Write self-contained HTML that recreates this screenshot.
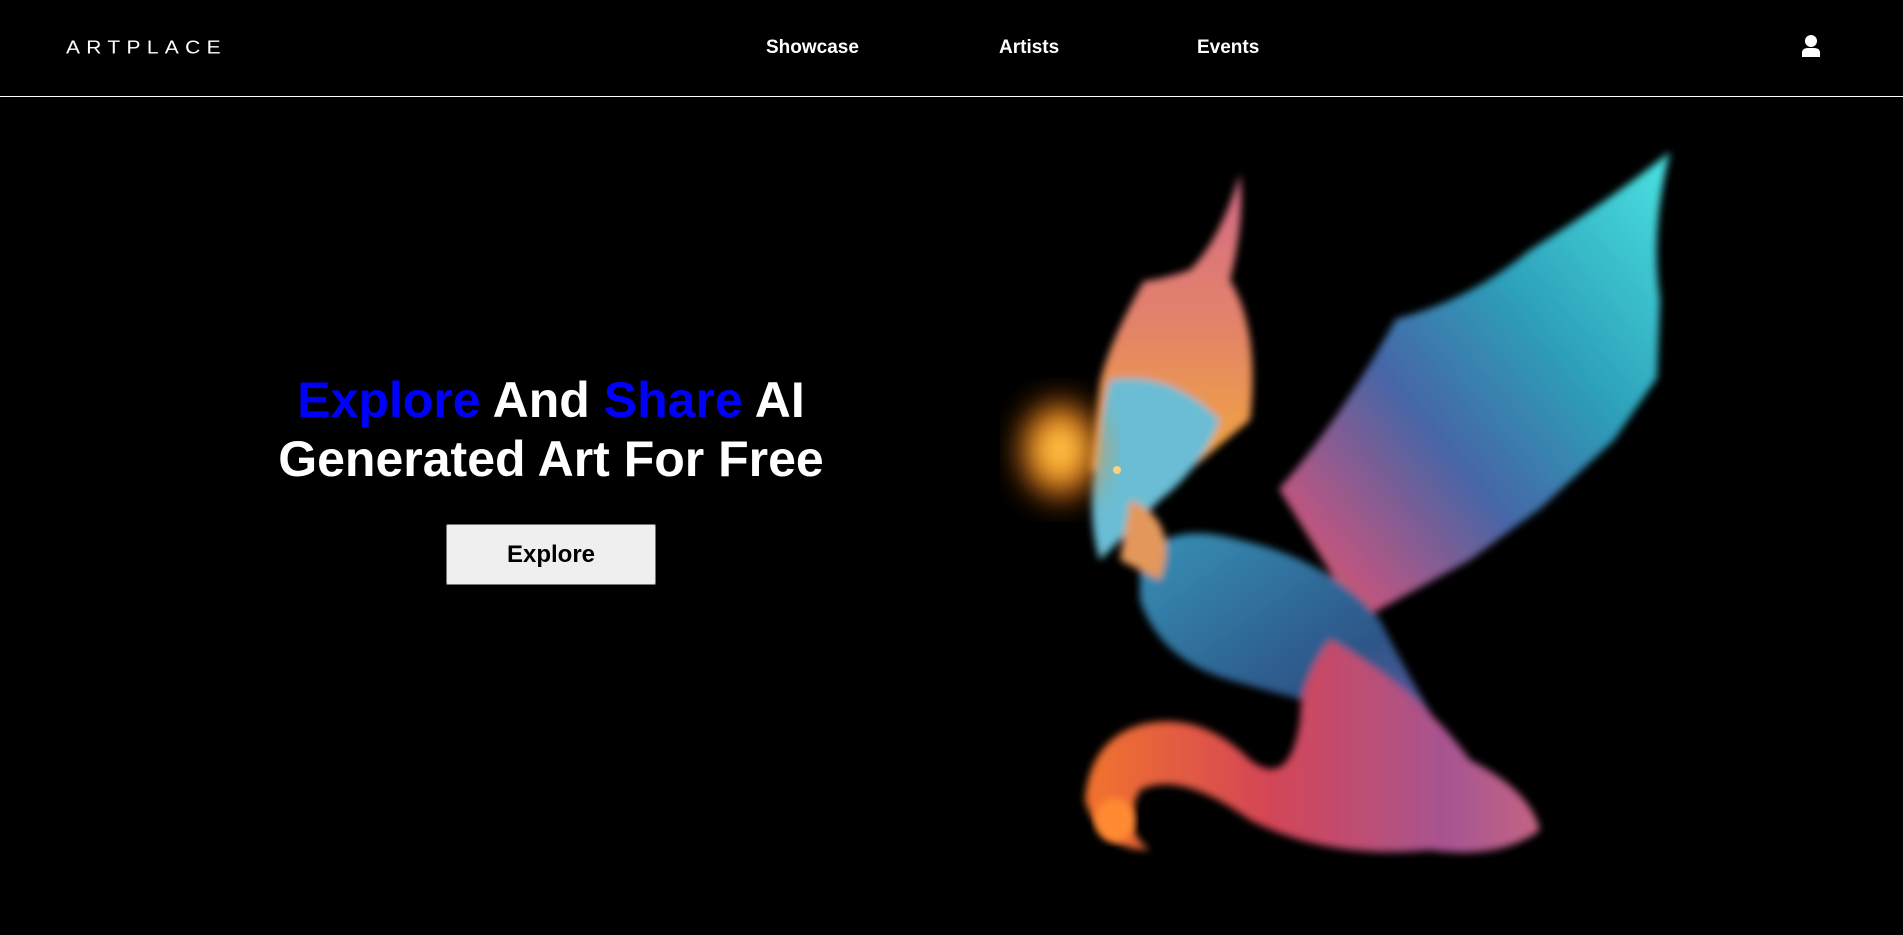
<!DOCTYPE html>
<html><head><meta charset="utf-8"><style>
html,body{margin:0;padding:0;background:#000;width:1903px;height:935px;overflow:hidden;font-family:"Liberation Sans",Arial,sans-serif;color:#fff}
.nav{position:absolute;left:0;top:0;width:1903px;height:96px;border-bottom:1px solid #fff}
.logo{position:absolute;left:66px;top:35px;font-size:21px;letter-spacing:6.3px;font-weight:300;line-height:26px;transform:scaleY(0.9)}
.link{position:absolute;top:36px;font-size:19px;font-weight:bold;line-height:24px}
.h{position:absolute;left:251px;width:600px;text-align:center;font-size:50px;font-weight:bold;line-height:59px;top:371px}
.b{color:#0000ff}
.btn{position:absolute;left:446px;top:524px;width:210px;height:61px;box-sizing:border-box;background:#efefef;border:1px solid #767676;border-radius:2px;color:#000;font-size:24px;font-weight:bold;text-align:center;line-height:60px}
svg{position:absolute;left:0;top:0}
</style></head><body>
<div class="nav">
<div class="logo">ARTPLACE</div>
<div class="link" style="left:766px">Showcase</div>
<div class="link" style="left:999px">Artists</div>
<div class="link" style="left:1197px">Events</div>
<svg width="1903" height="96" style="position:absolute;left:0;top:0"><circle cx="1811" cy="41" r="6" fill="#fff"/><path d="M1802 57 L1802 53 Q1802 48 1808 48 L1814 48 Q1820 48 1820 53 L1820 57 Z" fill="#fff"/></svg>
</div>
<div class="h"><span class="b">Explore</span> And <span class="b">Share</span> AI<br>Generated Art For Free</div>
<div class="btn">Explore</div>
<svg width="1903" height="935" style="top:0">
<defs>
<filter id="bl"><feGaussianBlur stdDeviation="4"/></filter>
<filter id="bl2"><feGaussianBlur stdDeviation="14"/></filter>
<linearGradient id="wing" x1="1" y1="0" x2="0" y2="1"><stop offset="0" stop-color="#4ff0ee"/><stop offset="0.35" stop-color="#2fa9c4"/><stop offset="0.6" stop-color="#4a6cb0"/><stop offset="0.85" stop-color="#c35a8a"/><stop offset="1" stop-color="#e8704a"/></linearGradient>
<linearGradient id="crest" x1="0" y1="0" x2="0" y2="1"><stop offset="0" stop-color="#e07090"/><stop offset="0.5" stop-color="#f08a70"/><stop offset="1" stop-color="#ffb040"/></linearGradient>
<linearGradient id="tail" x1="0" y1="0" x2="1" y2="0"><stop offset="0" stop-color="#ff7a30"/><stop offset="0.4" stop-color="#e04a5a"/><stop offset="0.8" stop-color="#b05a9a"/><stop offset="1" stop-color="#d06a8a"/></linearGradient>
<linearGradient id="body" x1="0" y1="0" x2="1" y2="1"><stop offset="0" stop-color="#3a9ac0"/><stop offset="0.6" stop-color="#2f5a90"/><stop offset="1" stop-color="#7a5fb0"/></linearGradient>
<radialGradient id="fire" cx="0.5" cy="0.5" r="0.5"><stop offset="0" stop-color="#ffe060"/><stop offset="0.5" stop-color="#ff9a20"/><stop offset="1" stop-color="#ff6010" stop-opacity="0"/></radialGradient>
</defs>
<g filter="url(#bl)" opacity="0.95">
<path d="M1670 152 Q1650 230 1660 300 L1657 378 L1614 440 L1541 508 L1470 560 L1360 620 L1279 489 Q1340 420 1396 319 Q1470 300 1530 250 Q1610 200 1670 152Z" fill="url(#wing)"/>
<path d="M1240 174 Q1220 240 1190 270 Q1160 280 1144 281 Q1110 340 1100 382 L1090 470 L1190 470 L1250 420 Q1260 330 1230 280 Q1245 220 1240 174Z" fill="url(#crest)"/>
<path d="M1140 560 Q1170 520 1240 540 Q1330 560 1380 620 Q1420 700 1460 760 Q1420 740 1380 720 Q1300 700 1230 680 Q1160 660 1140 600Z" fill="url(#body)"/>
<path d="M1330 640 Q1420 690 1470 760 Q1530 790 1540 830 Q1500 860 1430 850 Q1330 860 1250 820 Q1180 770 1140 790 Q1120 830 1150 850 Q1100 850 1085 800 Q1090 740 1140 725 Q1200 710 1250 760 Q1290 790 1300 720 Q1300 680 1330 640Z" fill="url(#tail)"/>
<path d="M1110 380 Q1170 370 1220 420 Q1200 470 1160 500 Q1120 540 1100 560 Q1080 500 1110 380Z" fill="#70c8e0"/>
<path d="M1130 500 Q1180 520 1160 580 L1120 560Z" fill="#f0a060"/>
</g>
<ellipse cx="1060" cy="450" rx="50" ry="60" fill="url(#fire)" filter="url(#bl2)"/>
<ellipse cx="1115" cy="820" rx="20" ry="22" fill="#ff8a30" filter="url(#bl)"/>
<circle cx="1117" cy="470" r="4" fill="#ffd080"/>
</svg>
</body></html>
